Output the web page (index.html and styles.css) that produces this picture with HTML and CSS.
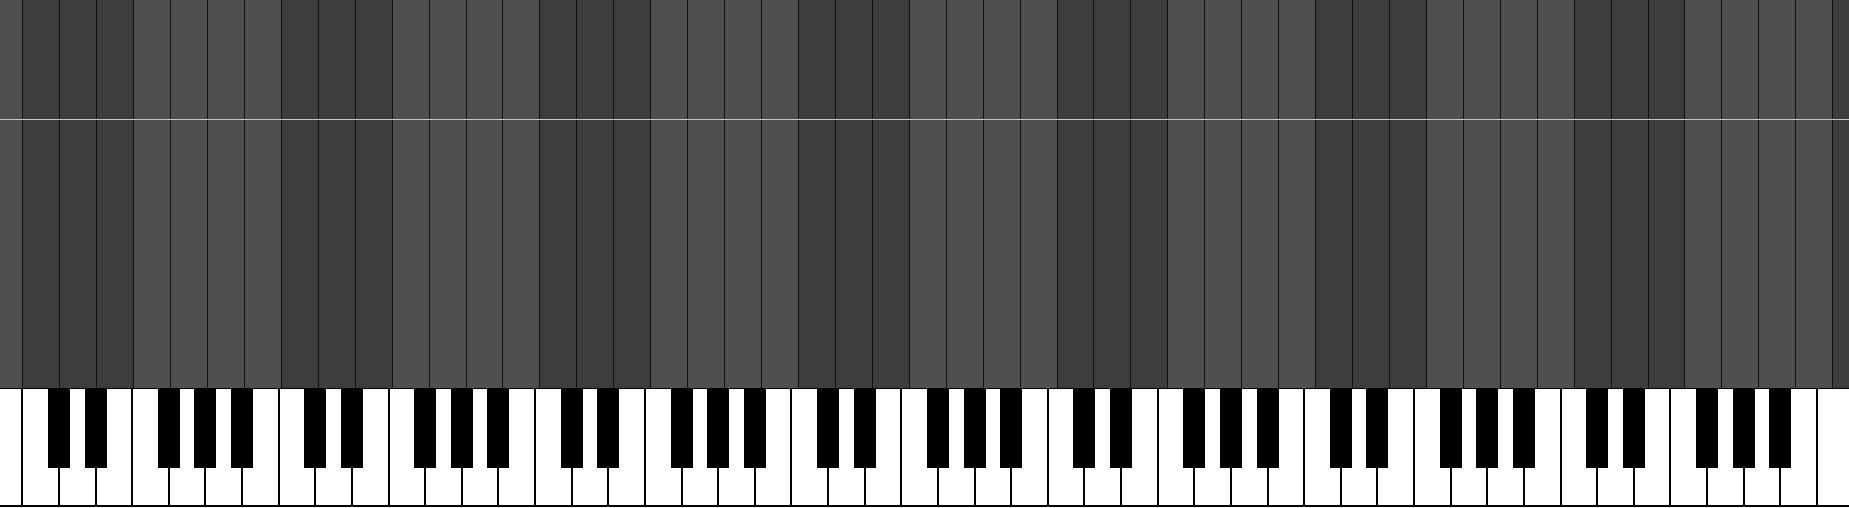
FILE: index.html
```html
<!DOCTYPE html>
<html lang="en">
<head>
    <meta charset="UTF-8">
    <title>Piano roll</title>
    <link rel="stylesheet" href="styles.css">
</head>
<body>
<div id="roll">
    <div id="lanes">
        <div class="lane"></div><div class="lane"></div><div class="lane"></div><div class="lane"></div>
        <div class="lane"></div><div class="lane"></div><div class="lane"></div><div class="lane"></div>
        <div class="lane"></div><div class="lane"></div><div class="lane"></div><div class="lane"></div>
        <div class="lane"></div><div class="lane"></div><div class="lane"></div><div class="lane"></div>
        <div class="lane"></div><div class="lane"></div><div class="lane"></div><div class="lane"></div>
        <div class="lane"></div><div class="lane"></div><div class="lane"></div><div class="lane"></div>
        <div class="lane"></div><div class="lane"></div><div class="lane"></div><div class="lane"></div>
        <div class="lane"></div><div class="lane"></div><div class="lane"></div><div class="lane"></div>
        <div class="lane"></div><div class="lane"></div><div class="lane"></div><div class="lane"></div>
        <div class="lane"></div><div class="lane"></div><div class="lane"></div><div class="lane"></div>
        <div class="lane"></div><div class="lane"></div><div class="lane"></div><div class="lane"></div>
        <div class="lane"></div><div class="lane"></div><div class="lane"></div><div class="lane"></div>
        <div class="lane"></div><div class="lane"></div><div class="lane"></div><div class="lane"></div>
    </div>
    <div id="nowLine"></div>
</div>
<div id="keyboard">
    <!-- A0 B0 -->
    <div class="key s"></div><div class="key"></div>
    <!-- octave 1 -->
    <div class="key s"></div><div class="key s"></div><div class="key"></div>
    <div class="key s"></div><div class="key s"></div><div class="key s"></div><div class="key"></div>
    <!-- octave 2 -->
    <div class="key s"></div><div class="key s"></div><div class="key"></div>
    <div class="key s"></div><div class="key s"></div><div class="key s"></div><div class="key"></div>
    <!-- octave 3 -->
    <div class="key s"></div><div class="key s"></div><div class="key"></div>
    <div class="key s"></div><div class="key s"></div><div class="key s"></div><div class="key"></div>
    <!-- octave 4 -->
    <div class="key s"></div><div class="key s"></div><div class="key"></div>
    <div class="key s"></div><div class="key s"></div><div class="key s"></div><div class="key"></div>
    <!-- octave 5 -->
    <div class="key s"></div><div class="key s"></div><div class="key"></div>
    <div class="key s"></div><div class="key s"></div><div class="key s"></div><div class="key"></div>
    <!-- octave 6 -->
    <div class="key s"></div><div class="key s"></div><div class="key"></div>
    <div class="key s"></div><div class="key s"></div><div class="key s"></div><div class="key"></div>
    <!-- octave 7 -->
    <div class="key s"></div><div class="key s"></div><div class="key"></div>
    <div class="key s"></div><div class="key s"></div><div class="key s"></div><div class="key"></div>
    <!-- C8 -->
    <div class="key"></div>
</div>
</body>
</html>
```

FILE: styles.css
```css
* {
    padding: 0;
    margin: 0;
    box-sizing: border-box;
}
html, body {
    width: 100%;
    height: 100%;
    overflow: hidden;
    background-color: #ffffff;
}
#roll {
    position: relative;
    height: 388px;
    overflow: hidden;
    background-color: #3d3d3d;
}
#lanes {
    display: flex;
    height: 100%;
    margin-left: -51.6px;
}
.lane {
    flex: none;
    width: 36.94px;
    height: 100%;
    border-left: 1px solid #121212;
    background-color: #4f4f4f;
}
/* C D E lanes are darker */
.lane:nth-child(7n+3),
.lane:nth-child(7n+4),
.lane:nth-child(7n+5) {
    background-color: #3d3d3d;
}
#nowLine {
    position: absolute;
    top: 119px;
    left: 0;
    right: 0;
    height: 1px;
    background-color: #c6c6c6;
}
#keyboard {
    display: flex;
    height: 120px;
    margin-left: -51.96px;
    border-top: 1px solid #000000;
    background-color: #ffffff;
}
.key {
    position: relative;
    flex: none;
    width: 36.63px;
    height: 118px;
    background-color: #ffffff;
    border-left: 2px solid #000000;
    border-bottom: 2px solid #000000;
}
.key.s::after {
    content: "";
    position: absolute;
    z-index: 1;
    top: 0;
    right: -12px;
    width: 22px;
    height: 79px;
    background-color: #000000;
}
```
